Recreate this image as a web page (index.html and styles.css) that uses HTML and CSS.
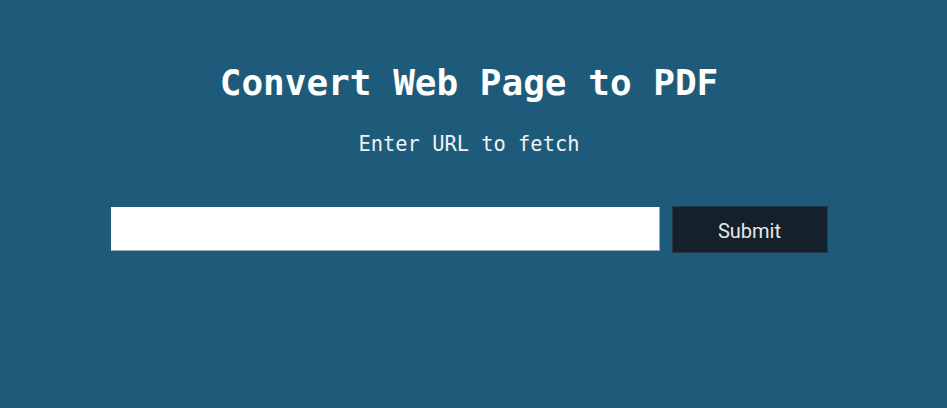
FILE: index.html
```html
<!DOCTYPE html>
<html>
<head>
<meta charset="utf-8">
<link rel="stylesheet" href="styles.css">
</head>
<body>
<main class="page">
  <h1 class="title">Convert Web Page to PDF</h1>
  <p class="subtitle">Enter URL to fetch</p>
  <form class="form">
    <input class="url-input" type="text">
    <button class="submit" type="button">Submit</button>
  </form>
</main>
</body>
</html>
```
FILE: styles.css
```css
html, body {
  margin: 0;
  padding: 0;
  height: 100%;
  background: #1e5b7b;
}
.page {
  display: flex;
  flex-direction: column;
  align-items: center;
  padding-top: 58px;
  padding-right: 9px;
  font-family: "DejaVu Sans Mono", monospace;
  color: #ffffff;
}
.title {
  margin: 0;
  font-size: 36px;
  font-weight: bold;
  line-height: 50px;
}
.subtitle {
  margin: 0;
  margin-top: 22px;
  font-size: 20.4px;
  line-height: 28px;
  color: #f0f2f4;
}
.form {
  display: flex;
  align-items: flex-start;
  gap: 12px;
  margin-top: 49px;
}
.url-input {
  box-sizing: border-box;
  width: 549px;
  height: 44px;
  border: none;
  border-right: 1px solid #9aa9b4;
  border-bottom: 1px solid #9aa9b4;
  background: #ffffff;
  margin: 0;
  padding: 0 10px;
}
.submit {
  box-sizing: border-box;
  width: 156px;
  height: 47px;
  background: #14202a;
  border: 1px solid #26394a;
  color: #e6e8ea;
  font-family: Roboto, "Liberation Sans", sans-serif;
  font-size: 20px;
  padding: 3px 0 0;
  margin: -1px 0 0 0;
}
```
